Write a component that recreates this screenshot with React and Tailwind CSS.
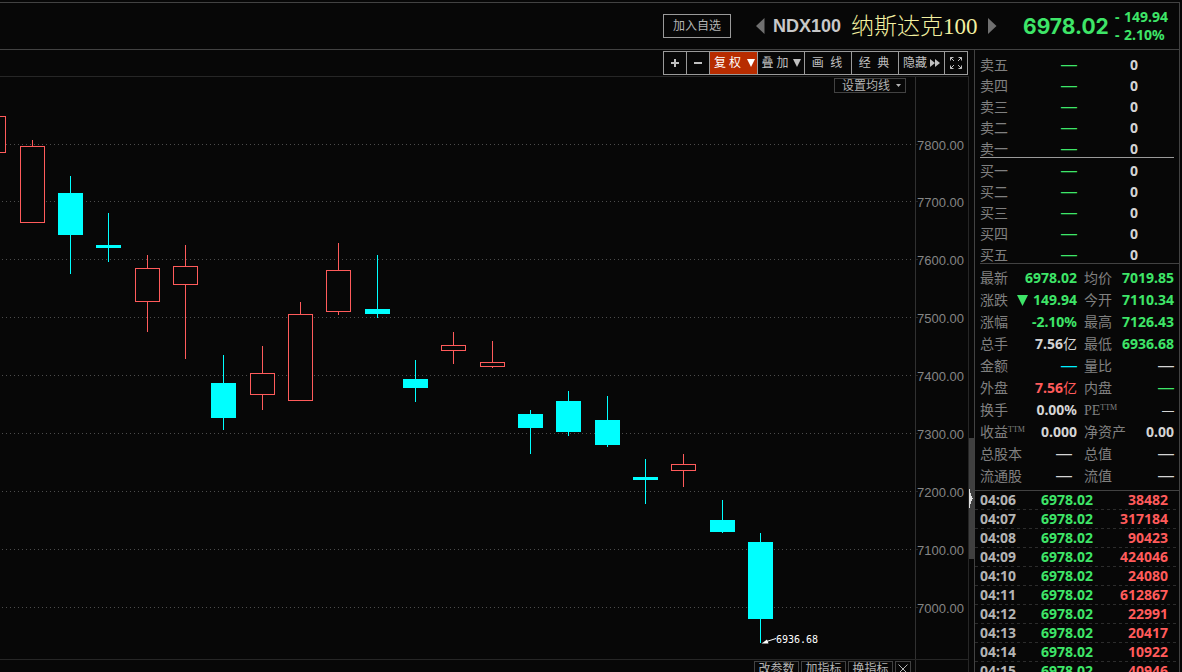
import React from "react";

const GRID = [
  [144, "7800.00"], [201, "7700.00"], [259, "7600.00"],
  [317, "7500.00"], [375, "7400.00"], [433, "7300.00"],
  [491, "7200.00"], [549, "7100.00"], [607, "7000.00"],
];

// [left, body top, body bottom, wick top, wick bottom, rising]
const CANDLES = [
  [-19, 116, 153, 116, 153, true],
  [20, 146, 223, 140, 223, true],
  [58, 193, 235, 176, 274, false],
  [96, 245, 248, 213, 262, false],
  [135, 268, 302, 255, 332, true],
  [173, 266, 285, 245, 359, true],
  [211, 383, 418, 355, 430, false],
  [250, 373, 395, 346, 410, true],
  [288, 314, 401, 302, 401, true],
  [326, 270, 312, 243, 315, true],
  [365, 309, 314, 255, 318, false],
  [403, 379, 388, 360, 402, false],
  [441, 345, 351, 332, 364, true],
  [480, 362, 367, 341, 368, true],
  [518, 414, 428, 410, 454, false],
  [556, 401, 432, 391, 436, false],
  [595, 420, 445, 396, 447, false],
  [633, 477, 480, 459, 504, false],
  [671, 464, 471, 454, 487, true],
  [710, 520, 532, 500, 533, false],
  [748, 542, 619, 533, 643, false],
];

const ASKS = ["卖五", "卖四", "卖三", "卖二", "卖一"];
const BIDS = ["买一", "买二", "买三", "买四", "买五"];

const TRADES = [
  ["04:06", "38482"], ["04:07", "317184"], ["04:08", "90423"], ["04:09", "424046"],
  ["04:10", "24080"], ["04:11", "612867"], ["04:12", "22991"], ["04:13", "20417"],
  ["04:14", "10922"], ["04:15", "40946"],
];

const GREEN = "text-[#3ee568]";
const RED = "text-[#ff5b5b]";
const LIGHT = "text-[#d4d4d4]";
const CYAN = "text-[#00f0ff]";

function Dash({ short }) {
  return (
    <span className={"font-['Liberation_Sans',sans-serif] font-normal " + (short ? "text-[12px]" : "text-[16px]")}>—</span>
  );
}

function Unit({ children }) {
  return <>{children}<span className="font-normal">亿</span></>;
}

const Sup = () => (
  <span className="align-[5px] font-['Liberation_Serif',serif] text-[8px] leading-none">TTM</span>
);

const STATS = [
  ["最新", GREEN, "6978.02", "均价", GREEN, "7019.85"],
  ["涨跌", GREEN, (
    <span className="inline-flex items-center gap-[5px]">
      <svg className="size-[11px]" viewBox="0 0 11 11"><path d="M0 0h11L5.5 11z" fill="currentColor" /></svg>
      149.94
    </span>
  ), "今开", GREEN, "7110.34"],
  ["涨幅", GREEN, "-2.10%", "最高", GREEN, "7126.43"],
  ["总手", LIGHT, <Unit>7.56</Unit>, "最低", GREEN, "6936.68"],
  ["金额", CYAN, <Dash />, "量比", LIGHT, <Dash />],
  ["外盘", RED, <Unit>7.56</Unit>, "内盘", GREEN, <Dash />],
  ["换手", LIGHT, "0.00%", <><span className="font-['Liberation_Serif',serif]">PE</span><Sup /></>, LIGHT, <Dash short />],
  [<>收益<Sup /></>, LIGHT, "0.000", "净资产", LIGHT, "0.00"],
  ["总股本", LIGHT, <span className="pr-[5px]"><Dash /></span>, "总值", LIGHT, <Dash />],
  ["流通股", LIGHT, <span className="pr-[5px]"><Dash /></span>, "流值", LIGHT, <Dash />],
];

function Header() {
  return (
    <header className="mt-[2px] flex h-12 shrink-0 items-center justify-end border-y border-r border-[#424242]">
      <button className="h-6 w-[68px] border border-[#9a9a9a] text-[12px] leading-none text-[#b4b4b4]">加入自选</button>
      <button aria-label="上一个" className="ml-[25px] w-[9px]">
        <svg className="h-4 w-[9px]" viewBox="0 0 9 16"><path d="M8.500 0v16L0 8z" fill="#707070" /></svg>
      </button>
      <strong className="ml-2 w-[78px] font-['Liberation_Sans',sans-serif] text-[18px] leading-[26px] text-[#c8c8c8]">NDX100</strong>
      <h1 className="w-[137px] whitespace-nowrap font-['Liberation_Serif','Noto_Sans_CJK_SC',sans-serif] text-[23px] font-light leading-none text-[#f3f0a0]">纳斯达克100</h1>
      <button aria-label="下一个" className="w-[9px]">
        <svg className="h-4 w-[9px]" viewBox="0 0 9 16"><path d="M0 0v16l8.500-8z" fill="#707070" /></svg>
      </button>
      <strong className="ml-[26px] w-[92px] font-['Inter','Liberation_Sans',sans-serif] text-[21px] font-bold leading-none text-[#3ee568]">6978.02</strong>
      <div className="grid w-16 grid-cols-[9px_1fr] text-[14px] font-bold leading-[18px] text-[#3ee568]">
        <span>-</span><span>149.94</span>
        <span>-</span><span>2.10%</span>
      </div>
    </header>
  );
}

function Triangle() {
  return <svg className="h-2 w-2 shrink-0" viewBox="0 0 8 8"><path d="M0 0h8L4 8z" fill="currentColor" /></svg>;
}

function Toolbar() {
  const cell = "flex h-full items-center justify-center whitespace-pre border-l border-[#9a9a9a]";
  return (
    <div className="flex h-[26px] shrink-0 items-center justify-end text-[12px] leading-none text-[#c0c0c0]">
      <div className="flex h-6 border-y border-r border-[#9a9a9a]">
        <button aria-label="放大" className={cell + " w-[23px]"}>
          <svg className="size-2" viewBox="0 0 8 8"><path d="M0 4h8M4 0v8" stroke="currentColor" strokeWidth="2" /></svg>
        </button>
        <button aria-label="缩小" className={cell + " w-[23px]"}>
          <svg className="size-2" viewBox="0 0 8 8"><path d="M0 4h8" stroke="currentColor" strokeWidth="2" /></svg>
        </button>
        <button className={cell + " w-12 gap-[6px] bg-[#b72c00] pl-[2px] text-white"}>复 权<Triangle /></button>
        <button className={cell + " w-[47px] gap-[4px]"}>叠 加<Triangle /></button>
        <button className={cell + " w-[47px] pr-[2px]"}>画{"  "}线</button>
        <button className={cell + " w-[47px] pr-[2px]"}>经{"  "}典</button>
        <button className={cell + " w-[46px] gap-[3px]"}>
          隐藏
          <svg className="h-2 w-[10px] shrink-0" viewBox="0 0 10 8"><path d="M0 0l5 4-5 4zM5 0l5 4-5 4z" fill="currentColor" /></svg>
        </button>
        <button aria-label="全屏" className={cell + " w-[23px]"}>
          <svg className="size-3" viewBox="0 0 12 12" fill="none" stroke="currentColor">
            <path d="M.5 3.500v-3h3M.5.5l3.500 3.500M8.500.5h3v3M11.500.5L8 4M.5 8.500v3h3M.5 11.500L4 8M11.500 8.500v3h-3M11.500 11.500L8 8" />
          </svg>
        </button>
      </div>
    </div>
  );
}

function Candle({ data: [x, top, bottom, high, low, up] }) {
  const c = up ? "#ff5b5b" : "#00ffff";
  return (
    <g fill={c}>
      <rect x={x + 12} y={high} width="1" height={top - high} />
      <rect x={x + 12} y={bottom} width="1" height={low - bottom} />
      {up
        ? <rect x={x + 0.5} y={top + 0.5} width="24" height={bottom - top - 1} fill="#070707" stroke={c} />
        : <rect x={x} y={top} width="25" height={bottom - top} />}
    </g>
  );
}

function Chart() {
  return (
    <div className="relative min-h-0 flex-1 border-y border-[#262626]">
      <svg className="block h-full w-full" viewBox="0 77 968 582" role="img" aria-label="K线图">
        {GRID.map(([y, label]) => (
          <g key={label}>
            <path d={`M2 ${y + 0.5}H912`} stroke="#4c4c4c" strokeDasharray="1 3" />
            <path d={`M916 ${y + 0.5}h2`} stroke="#262626" />
            <text x="917" y={y + 6} fill="#858585" className="font-['Liberation_Sans',sans-serif] text-[13px]">{label}</text>
          </g>
        ))}
        <path d="M915.500 77v582" stroke="#303030" />
        {CANDLES.map((c) => <Candle key={c[0]} data={c} />)}
        <path d="M776 638.500L765 642" stroke="#fff" fill="none" />
        <path d="M761.500 643.500l5.500-4 1.500 4z" fill="#fff" />
        <text x="776" y="643" fill="#fff" className="font-['DejaVu_Sans_Mono',monospace] text-[10px]">6936.68</text>
      </svg>
      <button className="absolute right-[62px] top-px flex h-[15px] w-[72px] items-center justify-end gap-[6px] border border-[#424242] pr-1 text-[12px] leading-none text-[#b4b4b4]">
        设置均线
        <svg className="h-[3px] w-[5px]" viewBox="0 0 5 3"><path d="M0 0h5L2.500 3z" fill="currentColor" /></svg>
      </button>
    </div>
  );
}

function IndicatorBar() {
  const btn = "h-5 w-[45px] border border-[#424242] pb-1 leading-[14px]";
  return (
    <div className="mr-[52px] flex h-3 shrink-0 items-start justify-end gap-[2px] overflow-hidden border-r border-[#303030] pr-1 pt-px text-[12px] text-[#b4b4b4]">
      <button className={btn}>改参数</button>
      <button className={btn}>加指标</button>
      <button className={btn}>换指标</button>
      <button aria-label="关闭" className="flex h-5 w-4 justify-center border border-[#424242] pt-[2px]">
        <svg className="size-[10px]" viewBox="0 0 10 10"><path d="M.5.5l9 9M9.500.5l-9 9" stroke="currentColor" /></svg>
      </button>
    </div>
  );
}

function Book({ rows, label }) {
  return (
    <table aria-label={label} className="w-[158px] table-fixed leading-[21px]">
      <colgroup><col className="w-[34px]" /><col className="w-[63px]" /><col className="w-[61px]" /></colgroup>
      <tbody>
        {rows.map((r) => (
          <tr key={r} className="h-[21px]">
            <th className="p-0 text-left font-normal text-[#808080]"><div className="h-[21px] whitespace-nowrap">{r}</div></th>
            <td className="p-0 text-right text-[#3ee568]"><div className="h-[21px]"><Dash /></div></td>
            <td className="p-0 text-right font-bold text-[#d4d4d4]">0</td>
          </tr>
        ))}
      </tbody>
    </table>
  );
}

function Quote() {
  return (
    <aside className="flex w-[206px] shrink-0 flex-col overflow-hidden border-x border-[#424242] text-[14px]">
      <div className="shrink-0 pl-[5px] pt-1">
        <Book rows={ASKS} label="卖盘" />
        <hr className="-mt-[2px] mb-[2px] mr-[5px] border-[#9a9a9a]" />
        <Book rows={BIDS} label="买盘" />
      </div>
      <div className="-mt-[2px] ml-[5px] shrink-0 border-t border-[#424242] py-[3px] pr-[5px]">
        <table aria-label="行情" className="w-full table-fixed leading-[22px]">
          <colgroup><col className="w-[34px]" /><col className="w-[63px]" /><col className="w-[41px]" /><col /></colgroup>
          <tbody>
            {STATS.map(([l1, c1, v1, l2, c2, v2], i) => (
              <tr key={i} className="h-[22px] whitespace-nowrap">
                <th className="p-0 text-left font-normal text-[#808080]"><div className="h-[22px]">{l1}</div></th>
                <td className={"p-0 text-right font-bold " + c1}><div className="h-[22px]">{v1}</div></td>
                <th className="p-0 pl-[7px] text-left font-normal text-[#808080]"><div className="h-[22px]">{l2}</div></th>
                <td className={"p-0 text-right font-bold " + c2}><div className="h-[22px]">{v2}</div></td>
              </tr>
            ))}
          </tbody>
        </table>
      </div>
      <div className="min-h-0 flex-1 overflow-hidden border-t border-[#424242] pr-[3px]">
        <table aria-label="成交明细" className="w-full table-fixed border-separate border-spacing-0 font-bold leading-[17px]">
          <colgroup><col className="w-[54px]" /><col className="w-16" /><col /></colgroup>
          <tbody>
            {TRADES.map(([t, v]) => (
              <tr key={t} className="h-[19px] bg-[repeating-linear-gradient(90deg,#2c2c2c_0_3px,transparent_3px_6px)] bg-[length:100%_1px] bg-bottom bg-no-repeat align-top">
                <td className="p-0 pl-[5px] text-[#b4b4b4]">{t}</td>
                <td className="p-0 text-right text-[#3ee568]">6978.02</td>
                <td className="p-0 pr-2 text-right text-[#ff5b5b]">{v}</td>
              </tr>
            ))}
          </tbody>
        </table>
      </div>
    </aside>
  );
}

export default function App() {
  return (
    <div className="flex h-screen flex-col overflow-hidden bg-[#070707] pr-[2px] font-['Noto_Sans','Noto_Sans_CJK_SC',sans-serif]">
      <Header />
      <div className="flex min-h-0 flex-1">
        <main className="flex min-w-0 flex-1 flex-col">
          <Toolbar />
          <Chart />
          <IndicatorBar />
        </main>
        <div className="mt-[26px] w-[6px] shrink-0 border-l border-[#262626]">
          <button aria-label="收起侧栏" className="mt-[362px] flex h-[121px] w-[5px] items-center bg-[#404040]">
            <svg className="h-[19px] w-1" viewBox="0 0 4 19"><path d="M0 0h1v4h1v3h1v2h1v1h-1v2h-1v3h-1v4H0z" fill="#e0e0e0" /></svg>
          </button>
        </div>
        <Quote />
      </div>
    </div>
  );
}
